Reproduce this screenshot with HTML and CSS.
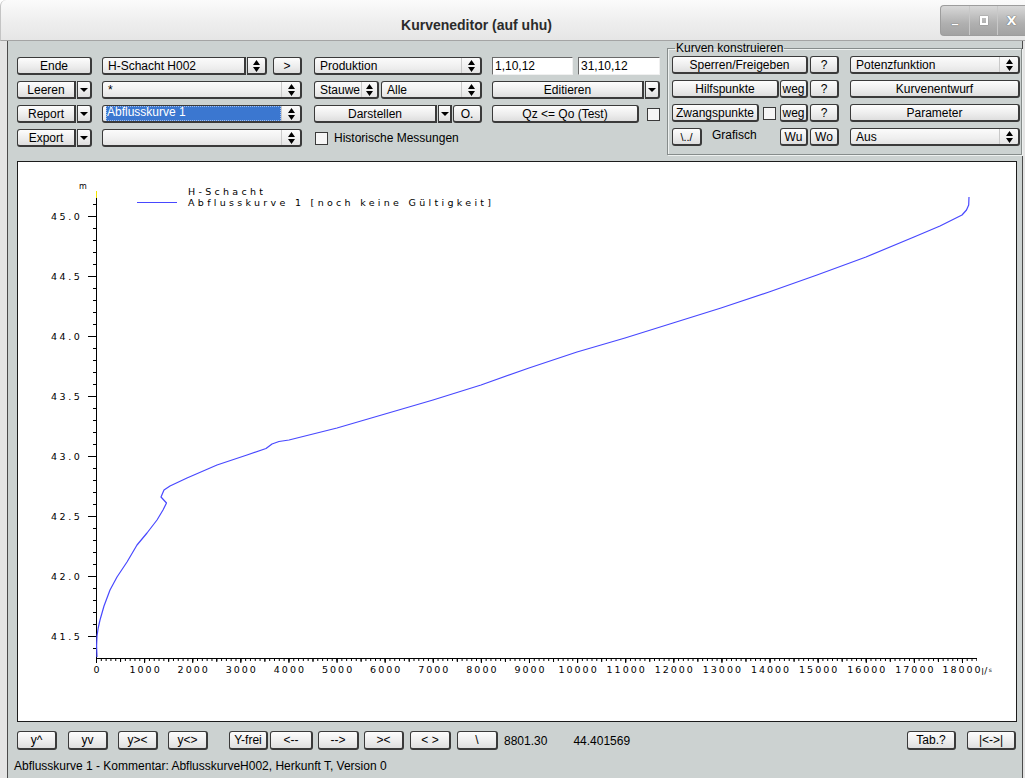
FILE: index.html
```html
<!DOCTYPE html>
<html lang="de">
<head>
<meta charset="utf-8">
<title>Kurveneditor (auf uhu)</title>
<link rel="stylesheet" href="styles.css">
</head>
<body>
<div class="window">
  <header class="titlebar">
    <div class="title">Kurveneditor (auf uhu)</div>
    <div class="wm">
      <span class="wm-btn">_</span>
      <span class="wm-btn"><span class="wm-max"></span></span>
      <span class="wm-btn">X</span>
    </div>
  </header>

  <div class="frame">
    <main class="client">
      <section class="toolbar">
        <div class="col col-a">
          <div class="row"><span class="btn grow">Ende</span></div>
          <div class="row split">
            <span class="btn main grow">Leeren</span>
            <span class="btn arrow w-15"><svg class="tri" viewBox="0 0 8 4"><path d="M0 0H8L4 4Z"/></svg></span>
          </div>
          <div class="row split">
            <span class="btn main grow">Report</span>
            <span class="btn arrow w-15"><svg class="tri" viewBox="0 0 8 4"><path d="M0 0H8L4 4Z"/></svg></span>
          </div>
          <div class="row split">
            <span class="btn main grow">Export</span>
            <span class="btn arrow w-15"><svg class="tri" viewBox="0 0 8 4"><path d="M0 0H8L4 4Z"/></svg></span>
          </div>
        </div>

        <div class="col col-b">
          <div class="row">
            <span class="combo field-only w-144">H-Schacht H002</span>
            <span class="btn spin-btn w-20 gap-1"><svg class="spin" viewBox="0 0 7 12"><path d="M0 5L3.5 0L7 5Z M0 7L3.5 12L7 7Z"/></svg></span>
            <span class="btn w-29 gap-6">&gt;</span>
          </div>
          <div class="row">
            <span class="combo grow"><span class="combo-text">*</span><span class="spin-box"><svg class="spin" viewBox="0 0 7 12"><path d="M0 5L3.5 0L7 5Z M0 7L3.5 12L7 7Z"/></svg></span></span>
          </div>
          <div class="row">
            <span class="combo grow"><span class="combo-text"><span class="selected">Abflusskurve 1</span></span><span class="spin-box"><svg class="spin" viewBox="0 0 7 12"><path d="M0 5L3.5 0L7 5Z M0 7L3.5 12L7 7Z"/></svg></span></span>
          </div>
          <div class="row">
            <span class="combo grow"><span class="combo-text"></span><span class="spin-box"><svg class="spin" viewBox="0 0 7 12"><path d="M0 5L3.5 0L7 5Z M0 7L3.5 12L7 7Z"/></svg></span></span>
          </div>
        </div>

        <div class="col col-c">
          <div class="row">
            <span class="combo grow"><span class="combo-text">Produktion</span><span class="spin-box"><svg class="spin" viewBox="0 0 7 12"><path d="M0 5L3.5 0L7 5Z M0 7L3.5 12L7 7Z"/></svg></span></span>
          </div>
          <div class="row">
            <span class="combo w-65"><span class="combo-text">Stauwe</span><span class="spin-box narrow"><svg class="spin" viewBox="0 0 7 12"><path d="M0 5L3.5 0L7 5Z M0 7L3.5 12L7 7Z"/></svg></span></span>
            <span class="combo grow gap-2"><span class="combo-text">Alle</span><span class="spin-box"><svg class="spin" viewBox="0 0 7 12"><path d="M0 5L3.5 0L7 5Z M0 7L3.5 12L7 7Z"/></svg></span></span>
          </div>
          <div class="row">
            <span class="btn main grow">Darstellen</span>
            <span class="btn arrow mid w-14 gap-1"><svg class="tri" viewBox="0 0 8 4"><path d="M0 0H8L4 4Z"/></svg></span>
            <span class="btn w-29 gap-1">O.</span>
          </div>
          <div class="row check-row">
            <span class="check"></span>
            <span class="label">Historische Messungen</span>
          </div>
        </div>

        <div class="col col-d">
          <div class="row">
            <span class="entry w-81">1,10,12</span>
            <span class="entry grow gap-5">31,10,12</span>
          </div>
          <div class="row split">
            <span class="btn main grow">Editieren</span>
            <span class="btn arrow w-15"><svg class="tri" viewBox="0 0 8 4"><path d="M0 0H8L4 4Z"/></svg></span>
          </div>
          <div class="row">
            <span class="btn grow">Qz &lt;= Qo (Test)</span>
            <span class="check gap-8"></span>
          </div>
          <div class="row"></div>
        </div>

        <fieldset class="group">
          <legend>Kurven konstruieren</legend>
          <div class="group-grid">
            <div class="row">
              <span class="btn w-136">Sperren/Freigeben</span>
              <span class="btn w-29 gap-2">?</span>
            </div>
            <div class="row">
              <span class="combo grow"><span class="combo-text">Potenzfunktion</span><span class="spin-box"><svg class="spin" viewBox="0 0 7 12"><path d="M0 5L3.5 0L7 5Z M0 7L3.5 12L7 7Z"/></svg></span></span>
            </div>
            <div class="row">
              <span class="btn w-107">Hilfspunkte</span>
              <span class="btn w-28 gap-1">weg</span>
              <span class="btn w-29 gap-2">?</span>
            </div>
            <div class="row">
              <span class="btn grow">Kurvenentwurf</span>
            </div>
            <div class="row">
              <span class="btn w-87">Zwangspunkte</span>
              <span class="check gap-4"></span>
              <span class="btn w-28 gap-4">weg</span>
              <span class="btn w-29 gap-2">?</span>
            </div>
            <div class="row">
              <span class="btn grow">Parameter</span>
            </div>
            <div class="row">
              <span class="btn w-30 small">\../</span>
              <span class="label grafisch">Grafisch</span>
              <span class="btn w-28">Wu</span>
              <span class="btn w-29 gap-2">Wo</span>
            </div>
            <div class="row">
              <span class="combo grow"><span class="combo-text">Aus</span><span class="spin-box"><svg class="spin" viewBox="0 0 7 12"><path d="M0 5L3.5 0L7 5Z M0 7L3.5 12L7 7Z"/></svg></span></span>
            </div>
          </div>
        </fieldset>
      </section>

      <section class="chart">
        <svg class="plot" width="998" height="559" viewBox="18 162 998 559" xmlns="http://www.w3.org/2000/svg">
          <!-- y axis -->
          <line x1="96.5" y1="191" x2="96.5" y2="198" stroke="#f2e600" stroke-width="1"/>
          <line x1="96.5" y1="198" x2="96.5" y2="659" stroke="#000" stroke-width="1"/>
          <line x1="94.5" y1="204" x2="94.5" y2="658" stroke="#000" stroke-width="3" stroke-dasharray="1 11"/>
          <line x1="92" y1="216" x2="92" y2="640" stroke="#000" stroke-width="8" stroke-dasharray="1 59"/>

          <!-- x axis -->
          <line x1="96" y1="658.5" x2="977" y2="658.5" stroke="#000" stroke-width="1"/>
          <line x1="96" y1="660" x2="977" y2="660" stroke="#000" stroke-width="2" stroke-dasharray="1 3.8105"/>
          <line x1="96" y1="660.5" x2="977" y2="660.5" stroke="#000" stroke-width="3" stroke-dasharray="1 23.055"/>
          <line x1="96" y1="661" x2="977" y2="661" stroke="#000" stroke-width="4" stroke-dasharray="1 47.11"/>

          <g class="axis-text">
            <text x="79" y="189" class="unit">m</text>
            <g text-anchor="end" class="y-labels">
              <text x="82.5" y="219.5">45.0</text>
              <text x="82.5" y="279.5">44.5</text>
              <text x="82.5" y="339.5">44.0</text>
              <text x="82.5" y="399.5">43.5</text>
              <text x="82.5" y="459.5">43.0</text>
              <text x="82.5" y="519.5">42.5</text>
              <text x="82.5" y="579.5">42.0</text>
              <text x="82.5" y="639.5">41.5</text>
            </g>
            <g text-anchor="middle">
              <text x="97.5" y="672.5">0</text>
              <text x="145.6" y="672.5">1000</text>
              <text x="193.7" y="672.5">2000</text>
              <text x="241.8" y="672.5">3000</text>
              <text x="289.9" y="672.5">4000</text>
              <text x="338.1" y="672.5">5000</text>
              <text x="386.2" y="672.5">6000</text>
              <text x="434.3" y="672.5">7000</text>
              <text x="482.4" y="672.5">8000</text>
              <text x="530.5" y="672.5">9000</text>
              <text x="578.6" y="672.5">10000</text>
              <text x="626.7" y="672.5">11000</text>
              <text x="674.8" y="672.5">12000</text>
              <text x="722.9" y="672.5">13000</text>
              <text x="771" y="672.5">14000</text>
              <text x="819.2" y="672.5">15000</text>
              <text x="867.3" y="672.5">16000</text>
              <text x="915.4" y="672.5">17000</text>
              <text x="962.5" y="672.5">18000</text>
            </g>
            <text x="981.5" y="675" class="unit">l<tspan dx="0.5" dy="-1" class="unit-slash">/</tspan><tspan dx="1.5" dy="-2" class="unit-s">s</tspan></text>
          </g>

          <!-- legend -->
          <line x1="137" y1="202.5" x2="177" y2="202.5" stroke="#4848ff" stroke-width="1.2"/>
          <text x="188" y="195" class="legend">H-Schacht</text>
          <text x="188" y="205.5" class="legend">Abflusskurve 1 [noch keine Gültigkeit]</text>

          <!-- rating curve -->
          <path class="curve" d="M97,657 L96.6,646 L97,636 L98.2,628 L100,620 L104,606 L110,590 L117,577 L127,562 L137,545 L147,533 L157,520 L163,510 L166.5,503 L161,497 L164,490 L170,486 L187,478 L217,465 L247,455 L266,448.5 L272,444 L279,441.5 L289,440 L337,428 L385,414 L433,400 L481,385 L529,368 L577,352 L625,338 L673,323 L721,308 L769,292 L817,275 L866,257 L914,237 L940,226 L962,215 L966.5,210 L968.7,205 L969,197"/>
        </svg>
      </section>

      <section class="bottombar">
        <span class="btn w-40">y^</span>
        <span class="btn w-40 ml-11">yv</span>
        <span class="btn w-40 ml-10">y&gt;&lt;</span>
        <span class="btn w-40 ml-10">y&lt;&gt;</span>
        <span class="btn w-39 ml-21">Y-frei</span>
        <span class="btn w-43 ml-2">&lt;--</span>
        <span class="btn w-41 ml-5">--&gt;</span>
        <span class="btn w-40 ml-5">&gt;&lt;</span>
        <span class="btn w-41 ml-6">&lt; &gt;</span>
        <span class="btn w-41 ml-6">\</span>
        <span class="value ml-6">8801.30</span>
        <span class="value ml-26">44.401569</span>
        <span class="btn w-49 push">Tab.?</span>
        <span class="btn w-49 ml-11">|&lt;-&gt;|</span>
      </section>

      <footer class="status">Abflusskurve 1 - Kommentar: AbflusskurveH002, Herkunft T, Version 0</footer>
    </main>
  </div>
</div>
</body>
</html>
```

FILE: styles.css
```css
* {
  box-sizing: border-box;
}

html,
body {
  margin: 0;
  padding: 0;
}

body {
  width: 1025px;
  height: 778px;
  overflow: hidden;
  background: #ffffff;
  font-family: "Liberation Sans", Arial, sans-serif;
  font-size: 12px;
  color: #000;
}

.window {
  width: 1025px;
  height: 778px;
  display: flex;
  flex-direction: column;
}

/* ---------- title bar ---------- */
.titlebar {
  flex: none;
  height: 41px;
  display: flex;
  align-items: flex-start;
  background: linear-gradient(#fbfbfb, #eeeeee 55%, #e6e6e6);
  border-bottom: 1px solid #a4a4a4;
  border-left: 1px solid #c4c4c4;
  border-top-left-radius: 6px;
}

.title {
  flex: 1;
  text-align: center;
  padding: 17px 0 0 12px;
  font: bold 14px "Liberation Sans", Arial, sans-serif;
  color: #2b2b2b;
  line-height: 16px;
}

.wm {
  display: flex;
  height: 31px;
  margin-top: 5px;
  border: 1px solid #9d9d9d;
  border-right: none;
  border-radius: 4px 0 0 4px;
  overflow: hidden;
  background: linear-gradient(#d8d8d8, #b0b0b0 60%, #a2a2a2);
}

.wm-btn {
  width: 28px;
  display: flex;
  align-items: center;
  justify-content: center;
  color: #fff;
  font: bold 13px "DejaVu Sans", sans-serif;
  text-shadow: 0 0 1px #666, 0 0 1px #666;
  border-left: 1px solid #c8c8c8;
}

.wm-btn:first-child {
  border-left: none;
  padding-bottom: 6px;
}

.wm-max {
  width: 8px;
  height: 9px;
  border: 2px solid #fff;
  box-shadow: 0 0 1px #666;
}

/* ---------- window frame ---------- */
.frame {
  flex: 1;
  display: flex;
  background: #e4e4e4;
  padding: 0 2px 0 7px;
}

.client {
  flex: 1;
  display: flex;
  flex-direction: column;
  background: #ccd2d1;
  border-left: 1px solid #4b4b4b;
  border-right: 1px solid #4b4b4b;
}

/* ---------- toolbar ---------- */
.toolbar {
  flex: none;
  height: 120px;
  display: flex;
  align-items: flex-start;
  padding-left: 9px;
}

.col {
  display: flex;
  flex-direction: column;
  gap: 6px;
  margin-top: 16px;
}

.col-a { width: 75px; }
.col-b { width: 200px; margin-left: 10px; }
.col-c { width: 168px; margin-left: 12px; }
.col-d { width: 168px; margin-left: 10px; }

.row {
  display: flex;
  align-items: center;
  height: 18px;
}

.split {
  gap: 1px;
}

.grow { flex: 1; min-width: 0; }

.btn {
  display: inline-flex;
  align-items: center;
  justify-content: center;
  height: 18px;
  flex: none;
  padding: 0;
  white-space: nowrap;
  font: 12px "Liberation Sans", Arial, sans-serif;
  color: #000;
  background: linear-gradient(#fdfdfd, #ececec 60%, #dedede);
  border: 1px solid #3a3a3a;
  border-right-width: 2px;
  border-bottom-width: 2px;
  border-radius: 3px;
}

.btn.grow { flex: 1; }

.btn.main {
  border-radius: 3px 0 0 3px;
}

.btn.arrow {
  border-radius: 0 3px 3px 0;
}

.btn.arrow.mid {
  border-radius: 0;
}

.btn.small {
  font-size: 11px;
}

.tri {
  width: 8px;
  height: 4px;
  fill: #000;
}

.spin {
  width: 7px;
  height: 12px;
  fill: #000;
}

.combo {
  display: flex;
  align-items: stretch;
  height: 18px;
  flex: none;
  background: linear-gradient(#fbfbfb, #efefef 60%, #e4e4e4);
  border: 1px solid #3a3a3a;
  border-right-width: 2px;
  border-bottom-width: 2px;
  border-radius: 3px;
  overflow: hidden;
}

.combo.grow { flex: 1; }

.combo.field-only {
  align-items: center;
  padding-left: 5px;
  border-radius: 3px 0 0 3px;
}

.btn.spin-btn {
  border-radius: 0 3px 3px 0;
}

.combo-text {
  flex: 1;
  display: flex;
  align-items: center;
  padding-left: 5px;
  white-space: nowrap;
  overflow: hidden;
}

.spin-box {
  width: 19px;
  display: flex;
  align-items: center;
  justify-content: center;
  border-left: 1px solid #c9c9c9;
}

.spin-box.narrow {
  width: 16px;
}

.selected {
  display: inline-block;
  width: 177px;
  height: 15px;
  line-height: 13px;
  margin-left: -2px;
  padding-left: 1px;
  color: #fff;
  background: #3b77d0;
  outline: 1px dotted #9fbff0;
  outline-offset: -1px;
}

.entry {
  display: flex;
  align-items: center;
  height: 18px;
  padding-left: 2px;
  background: #fff;
  border-top: 1px solid #6a6a6a;
  border-left: 1px solid #6a6a6a;
  border-right: 1px solid #f0f0f0;
  border-bottom: 1px solid #f0f0f0;
  white-space: nowrap;
}

.check {
  flex: none;
  width: 13px;
  height: 13px;
  background: #f6f6f6;
  border: 1px solid #3a3a3a;
}

.check-row .check {
  margin-left: 1px;
}

.label {
  white-space: nowrap;
}

.check-row .label {
  margin-left: 6px;
}

/* width helpers */
.w-14 { width: 14px; }
.w-15 { width: 15px; }
.w-20 { width: 20px; }
.w-28 { width: 28px; }
.w-29 { width: 29px; }
.w-30 { width: 30px; }
.w-39 { width: 39px; }
.w-40 { width: 40px; }
.w-41 { width: 41px; }
.w-43 { width: 43px; }
.w-49 { width: 49px; }
.w-65 { width: 65px; }
.w-81 { width: 81px; }
.w-87 { width: 87px; }
.w-107 { width: 107px; }
.w-136 { width: 136px; }
.w-144 { width: 144px; }

.gap-1 { margin-left: 1px; }
.gap-2 { margin-left: 2px; }
.gap-4 { margin-left: 4px; }
.gap-5 { margin-left: 5px; }
.gap-6 { margin-left: 6px; }
.gap-8 { margin-left: 8px; }

/* ---------- group box ---------- */
.group {
  width: 355px;
  margin: 1px 0 0 7px;
  padding: 1px 3px 8px 4px;
  border: 1px solid #868c8b;
  box-shadow: inset 1px 1px 0 #eef1f0, 1px 1px 0 #eef1f0;
  min-width: 0;
}

.group legend {
  margin-left: 3px;
  padding: 0 1px;
  font-size: 12px;
  line-height: 13px;
}

.group-grid {
  display: grid;
  grid-template-columns: 167px 170px;
  grid-auto-rows: 18px;
  column-gap: 11px;
  row-gap: 6px;
}

.grafisch {
  width: 68px;
  margin-left: 10px;
  padding-bottom: 4px;
}

/* ---------- chart ---------- */
.chart {
  flex: none;
  width: 1000px;
  height: 561px;
  margin-left: 9px;
  background: #fff;
  border: 1px solid #1c1c1c;
}

.plot {
  display: block;
}

.axis-text text {
  font-family: "DejaVu Sans", "Liberation Sans", sans-serif;
  font-size: 9.5px;
  letter-spacing: 2px;
  fill: #000;
}

.axis-text .y-labels text {
  letter-spacing: 2.6px;
}

.axis-text .unit {
  font-size: 8px;
  letter-spacing: 0;
}

.axis-text .unit-slash {
  font-size: 9px;
}

.axis-text .unit-s {
  font-size: 6px;
}

.legend {
  font-family: "DejaVu Sans", "Liberation Sans", sans-serif;
  font-size: 9.5px;
  letter-spacing: 3.3px;
  fill: #000;
}

.curve {
  fill: none;
  stroke: #4848ff;
  stroke-width: 1.2;
  stroke-linejoin: round;
}

/* ---------- bottom controls ---------- */
.bottombar {
  flex: none;
  display: flex;
  align-items: center;
  height: 19px;
  margin-top: 9px;
  padding: 0 6px 0 9px;
}

.bottombar .btn {
  height: 19px;
}

.ml-2 { margin-left: 2px; }
.ml-5 { margin-left: 5px; }
.ml-6 { margin-left: 6px; }
.ml-10 { margin-left: 10px; }
.ml-11 { margin-left: 11px; }
.ml-21 { margin-left: 21px; }
.ml-26 { margin-left: 26px; }

.push { margin-left: auto; }

.value {
  white-space: nowrap;
}

.status {
  margin-top: 9px;
  padding-left: 6px;
  line-height: 14px;
  white-space: nowrap;
}
```
